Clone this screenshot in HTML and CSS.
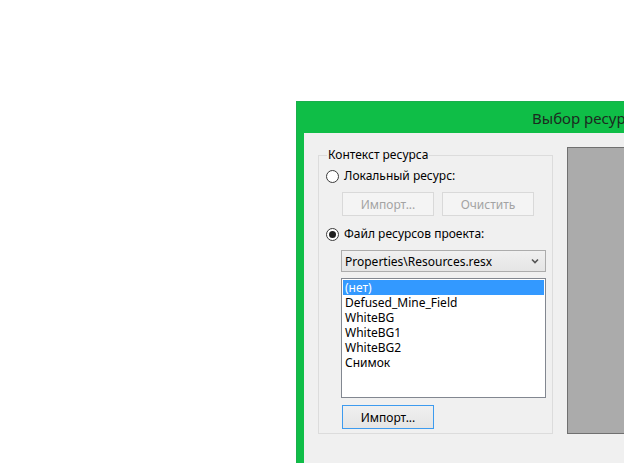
FILE: index.html
```html
<!DOCTYPE html>
<html lang="ru">
<head>
<meta charset="utf-8">
<title>Выбор ресурса</title>
<link rel="stylesheet" href="styles.css">
</head>
<body>
<div class="page">
  <div class="dialog">
    <div class="titlebar">Выбор ресурса</div>
    <div class="client">
      <div class="group">
        <div class="legend">Контекст ресурса</div>
        <div class="radio-row first">
          <span class="radio"></span>
          <span class="label">Локальный ресурс:</span>
        </div>
        <div class="btn-row">
          <div class="btn disabled">Импорт...</div>
          <div class="btn disabled">Очистить</div>
        </div>
        <div class="radio-row second">
          <span class="radio checked"></span>
          <span class="label">Файл ресурсов проекта:</span>
        </div>
        <div class="combo">
          <span class="combo-text">Properties\Resources.resx</span>
          <svg class="chevron" width="8" height="6" viewBox="0 0 8 6"><polyline points="1,1.5 4,4.5 7,1.5" fill="none" stroke="#555" stroke-width="1.6"/></svg>
        </div>
        <div class="listbox">
          <div class="item selected">(нет)</div>
          <div class="item">Defused_Mine_Field</div>
          <div class="item">WhiteBG</div>
          <div class="item">WhiteBG1</div>
          <div class="item">WhiteBG2</div>
          <div class="item">Снимок</div>
        </div>
        <div class="btn default">Импорт...</div>
      </div>
      <div class="preview"></div>
    </div>
  </div>
</div>
</body>
</html>
```

FILE: styles.css
```css
html, body {
  margin: 0;
  padding: 0;
  background: #ffffff;
  overflow: hidden;
  width: 624px;
  height: 463px;
}

body {
  font-family: "Noto Sans", "Open Sans", sans-serif;
  font-size: 12px;
  color: #000;
}

.page {
  padding: 101px 0 0 296px;
}

.dialog {
  width: 600px;
  height: 400px;
  background: #0fbe47;
  border-top: 1px solid #1aae4c;
  border-left: 1px solid #1aae4c;
  padding-left: 7px;
  box-sizing: border-box;
}

.titlebar {
  height: 31px;
  line-height: 32px;
  font-size: 15px;
  color: #1c2a1f;
  padding-left: 228px;
  white-space: nowrap;
}

.client {
  background: #f0f0f0;
  height: 340px;
  display: flex;
  align-items: flex-start;
  padding: 14px 0 0 14px;
  box-sizing: border-box;
}

.group {
  margin-top: 8px;
  width: 235px;
  height: 279px;
  box-sizing: border-box;
  border: 1px solid #dcdcdc;
  padding-left: 7px;
  display: flex;
  flex-direction: column;
  align-items: flex-start;
}

.legend {
  margin-top: -9px;
  margin-left: 1px;
  padding: 0 1px;
  line-height: 16px;
  height: 16px;
  background: #f0f0f0;
  white-space: nowrap;
}

.radio-row {
  display: flex;
  align-items: center;
  height: 16px;
  gap: 5px;
}

.radio-row.first { margin-top: 5px; }
.radio-row.second { margin-top: 10px; }

.radio {
  width: 13px;
  height: 13px;
  box-sizing: border-box;
  border: 1px solid #3b3b3b;
  border-radius: 50%;
  background: #fff;
  display: flex;
  align-items: center;
  justify-content: center;
}

.radio.checked::after {
  content: "";
  width: 7px;
  height: 7px;
  border-radius: 50%;
  background: #1f1f1f;
}

.label {
  line-height: 16px;
  white-space: nowrap;
}

.btn-row {
  display: flex;
  gap: 8px;
  margin-top: 8px;
  margin-left: 16px;
}

.btn {
  width: 92px;
  height: 24px;
  box-sizing: border-box;
  display: flex;
  align-items: center;
  justify-content: center;
  white-space: nowrap;
}

.btn.disabled {
  border: 1px solid #d9d9d9;
  background: #f4f4f4;
  color: #a3a3a3;
}

.btn.default {
  margin-top: 7px;
  margin-left: 16px;
  border: 1px solid #3d9bef;
  background: linear-gradient(#f0f0f0, #e5e5e5);
  color: #000;
}

.combo {
  margin-top: 8px;
  margin-left: 15px;
  width: 205px;
  height: 22px;
  box-sizing: border-box;
  border: 1px solid #acacac;
  background: linear-gradient(#f0f0f0, #e5e5e5);
  display: flex;
  align-items: center;
  justify-content: space-between;
  padding: 0 6px 0 3px;
}

.combo-text {
  white-space: nowrap;
}

.chevron {
  display: block;
}

.listbox {
  margin-top: 6px;
  margin-left: 15px;
  width: 205px;
  height: 120px;
  box-sizing: border-box;
  border: 1px solid #828790;
  background: #fff;
  padding: 1px;
}

.item {
  height: 15px;
  line-height: 15px;
  padding-left: 2px;
  white-space: nowrap;
}

.item.selected {
  background: #3399ff;
  color: #fff;
}

.preview {
  margin-left: 14px;
  width: 200px;
  height: 287px;
  box-sizing: border-box;
  border: 1px solid #707070;
  background: #ababab;
}
```
